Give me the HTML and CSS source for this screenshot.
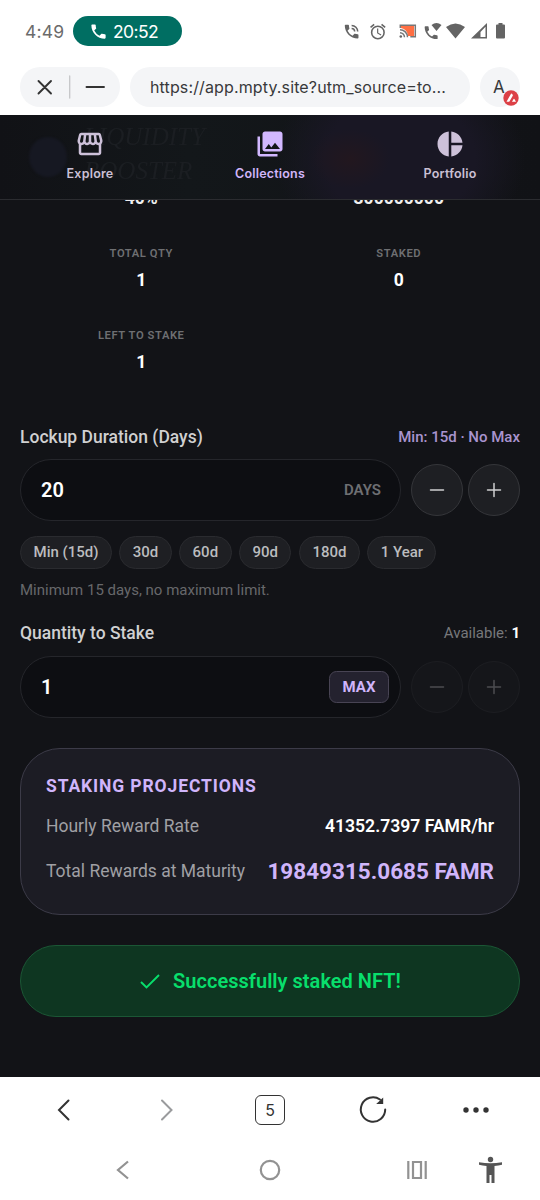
FILE: index.html
```html
<!DOCTYPE html>
<html lang="en">
<head>
<meta charset="utf-8">
<title>Staking</title>
<link rel="stylesheet" href="styles.css">
</head>
<body>
<div class="status">
  <span class="clock">4:49</span>
  <div class="call"><svg width="19" height="19" viewBox="0 0 24 24"><path d="M20 15.500c-1.200 0-2.500-.2-3.600-.6-.3-.1-.7 0-1 .2l-2.200 2.200a15 15 0 0 1-6.600-6.600l2.200-2.200c.3-.3.4-.7.2-1C8.700 6.400 8.500 5.200 8.500 4c0-.6-.4-1-1-1H4c-.6 0-1 .4-1 1 0 9.400 7.600 17 17 17 .6 0 1-.4 1-1v-3.500c0-.6-.4-1-1-1z"/></svg><span>20:52</span></div>
  <svg class="status-icons" width="165" height="20" viewBox="0 0 165 20">
    <g transform="translate(2.500 1.500) scale(.76)"><path d="M20 15.500c-1.250 0-2.450-.2-3.570-.57-.35-.11-.74-.03-1.020.24l-2.200 2.200a15 15 0 0 1-6.590-6.590l2.200-2.210c.28-.26.36-.65.250-1C8.700 6.450 8.500 5.250 8.500 4c0-.55-.45-1-1-1H4c-.55 0-1 .45-1 1 0 9.390 7.610 17 17 17 .55 0 1-.45 1-1v-3.500c0-.55-.45-1-1-1zM19 12h2a9 9 0 0 0-9-9v2a7 7 0 0 1 7 7zm-4 0h2a5 5 0 0 0-5-5v2a3 3 0 0 1 3 3z"/></g>
    <g transform="translate(28.500 1.300) scale(.78)"><path d="M22 5.720l-4.600-3.860-1.290 1.530 4.600 3.860zM7.880 3.390L6.600 1.860 2 5.710l1.290 1.530zM12.500 8H11v6l4.750 2.850.75-1.230-4-2.370zM12 4a9 9 0 1 0 0 18 9 9 0 0 0 0-18zm0 16a7 7 0 1 1 0-14 7 7 0 0 1 0 14z"/></g>
    <path class="cast-fill" d="M61 5h13v10h-6a9 9 0 0 0-7-8z"/>
    <path class="cast-line" d="M60.300 7V4.200h15v11.600h-5M60 8.700a7.500 7.500 0 0 1 7.500 7.500M60 11.700a4.500 4.500 0 0 1 4.500 4.500"/><circle cx="60.800" cy="15.500" r="1.300"/>
    <g transform="translate(82.500 3) scale(.72)"><path d="M20 15.500c-1.250 0-2.450-.2-3.570-.57-.35-.11-.74-.03-1.020.24l-2.200 2.200a15 15 0 0 1-6.590-6.590l2.200-2.210c.28-.26.36-.65.250-1C8.700 6.450 8.500 5.250 8.500 4c0-.55-.45-1-1-1H4c-.55 0-1 .45-1 1 0 9.390 7.610 17 17 17 .55 0 1-.45 1-1v-3.500c0-.55-.45-1-1-1z"/></g>
    <path d="M91.500 4Q96.500 0 101.500 4L96.500 10zM106 6Q115.500-1 125 6L115.500 17.500z"/>
    <path fill-rule="evenodd" d="M131 17.500L147 2v15.500zM140.500 11v5h5V5.800z"/>
    <path d="M157 3.500h1.500V2h4v1.500h1.500q1 0 1 1V16.500q0 1-1 1h-7q-1 0-1-1V4.500q0-1 1-1z"/>
  </svg>
</div>
<div class="urlbar">
  <div class="pill tools">
    <svg width="100" height="40" viewBox="0 0 100 40"><path class="ink" d="M18.500 14l12.500 12.500M31 14L18.500 26.500M66.500 20h17.500"/><path class="divider" d="M49.700 9v22"/></svg>
  </div>
  <div class="pill url">https://app.mpty.site?utm_source=to...</div>
  <div class="pill profile">A<svg class="badge" width="16" height="16" viewBox="0 0 16 16"><circle cx="8" cy="8" r="7.700"/><path d="M3.500 11.800L7.900 3.900q.8-1 1.500.3l.5 1.200L6.600 11.200q-.4.600-1 .6zM9 11.800l1.600-2.700q.4-.5.800 0l1.600 2.700z"/></svg></div>
</div>

<div class="app">
  <header class="nav">
    <div class="backdrop"><span class="orb"></span><span class="title">LIQUIDITY<br>BOOSTER</span></div>
    <a class="tab"><svg width="30" height="30" viewBox="0 0 24 24"><path d="M21.900 8.890l-1.050-4.370c-.22-.9-1-1.520-1.910-1.520H5.050c-.9 0-1.690.63-1.900 1.520L2.100 8.890c-.24 1.020-.02 2.060.62 2.880.08.11.19.19.28.29V19c0 1.100.9 2 2 2h14c1.100 0 2-.9 2-2v-6.940c.09-.09.2-.18.28-.28.64-.82.87-1.870.62-2.890zM18.910 4.990l1.050 4.370c.1.420.01.840-.25 1.170-.14.180-.44.470-.94.470-.61 0-1.140-.49-1.210-1.140L16.980 5zM13 5h1.960l.54 4.520c.05.390-.07.780-.33 1.070-.22.260-.54.410-.95.410-.67 0-1.220-.59-1.220-1.310zM8.490 9.520L9.040 5H11v4.690c0 .72-.55 1.310-1.290 1.310-.34 0-.65-.15-.89-.41-.25-.29-.37-.68-.33-1.070zm-4.450-.16L5.050 5h1.970l-.58 4.860c-.08.65-.6 1.140-1.210 1.140-.49 0-.8-.29-.93-.47-.27-.32-.36-.75-.26-1.170zM5 19v-6.030c.08.010.15.030.23.030.87 0 1.660-.36 2.240-.95.6.6 1.400.95 2.310.95.87 0 1.650-.36 2.230-.93.590.57 1.390.93 2.290.93.840 0 1.640-.35 2.240-.95.580.59 1.370.95 2.240.95.080 0 .15-.02.230-.03V19z"/></svg>Explore</a>
    <a class="tab active"><svg width="30" height="30" viewBox="0 0 24 24"><path d="M22 16V4c0-1.100-.9-2-2-2H8c-1.100 0-2 .9-2 2v12c0 1.100.9 2 2 2h12c1.100 0 2-.9 2-2zm-11-4l2.030 2.710L16 11l4 5H8zM2 6v14c0 1.100.9 2 2 2h14v-2H4V6z"/></svg>Collections</a>
    <a class="tab"><svg width="30" height="30" viewBox="0 0 24 24"><path d="M11 2v20c-5.070-.5-9-4.790-9-10s3.930-9.500 9-10zm2.030 0v8.990H22c-.47-4.740-4.240-8.520-8.970-8.990zm0 11.010V22c4.740-.47 8.500-4.250 8.970-8.990z"/></svg>Portfolio</a>
  </header>
  <main class="content">
    <div class="stats">
      <div class="stat"><b>40%</b></div>
      <div class="stat"><b>300000000</b></div>
      <div class="stat"><span>TOTAL QTY</span><b>1</b></div>
      <div class="stat"><span>STAKED</span><b>0</b></div>
      <div class="stat"><span>LEFT TO STAKE</span><b>1</b></div>
    </div>

    <div class="label-row"><span class="label">Lockup Duration (Days)</span><span class="limits">Min: 15d · No Max</span></div>
    <div class="input-row">
      <div class="field"><b>20</b><span class="unit">DAYS</span></div>
      <div class="round"><svg width="20" height="20" viewBox="0 0 20 20"><path d="M3.500 10h13"/></svg></div>
      <div class="round"><svg width="20" height="20" viewBox="0 0 20 20"><path d="M3.500 10h13M10 3.500v13"/></svg></div>
    </div>
    <div class="chips"><span class="w-min">Min (15d)</span><span>30d</span><span>60d</span><span>90d</span><span class="w-half">180d</span><span class="w-year">1 Year</span></div>
    <div class="hint">Minimum 15 days, no maximum limit.</div>

    <div class="label-row quantity"><span class="label">Quantity to Stake</span><span class="available">Available: <b>1</b></span></div>
    <div class="input-row">
      <div class="field"><b>1</b><span class="max">MAX</span></div>
      <div class="round off"><svg width="20" height="20" viewBox="0 0 20 20"><path d="M3.500 10h13"/></svg></div>
      <div class="round off"><svg width="20" height="20" viewBox="0 0 20 20"><path d="M3.500 10h13M10 3.500v13"/></svg></div>
    </div>

    <section class="card">
      <h2>STAKING PROJECTIONS</h2>
      <div class="line"><span class="key">Hourly Reward Rate</span><b class="rate">41352.7397 FAMR/hr</b></div>
      <div class="line total"><span class="key">Total Rewards at Maturity</span><b class="sum">19849315.0685 FAMR</b></div>
    </section>

    <div class="success"><svg width="22" height="22" viewBox="0 0 22 22"><path d="M2 12l5.500 5.500L20 5"/></svg><span>Successfully staked NFT!</span></div>
  </main>
</div>

<div class="toolbar">
  <svg width="30" height="34" viewBox="0 0 30 34"><path d="M19.500 7.500L10 17l9.500 9.500"/></svg>
  <svg class="dim" width="30" height="34" viewBox="0 0 30 34"><path d="M10 7.500l9.500 9.500-9.500 9.500"/></svg>
  <span class="tabs-count">5</span>
  <svg width="30" height="34" viewBox="0 0 30 34"><path d="M27.200 16.500A12.200 12.200 0 1 1 22 6.500"/><path class="solid" d="M25.200 4.500v6.500h-7z"/></svg>
  <svg width="30" height="34" viewBox="0 0 30 34"><g class="solid"><circle cx="5" cy="17" r="2.700"/><circle cx="15" cy="17" r="2.700"/><circle cx="25" cy="17" r="2.700"/></g></svg>
</div>
<div class="sysnav">
  <svg width="540" height="57" viewBox="0 0 540 57">
    <path d="M128 18.500L118 27l10 8.500"/><circle cx="270" cy="27" r="9.200"/>
    <path d="M408.300 18v18M425.700 18v18M413 19h8v16h-8z"/>
    <g class="person"><circle cx="490.500" cy="16.500" r="2.700"/><path d="M479 19.200q11.500 2.200 23 0v2.600q-3.500.8-7.500 1.100v17h-3V32h-2v7.900h-3v-17q-4-.3-7.500-1.100z"/></g>
  </svg>
</div>
</body>
</html>
```
FILE: styles.css
```css
* { box-sizing: border-box; }
body { margin: 0; width: 540px; height: 1200px; overflow: hidden; background: #fff; font-family: Roboto, sans-serif; }
svg { display: block; flex: none; }

.status { height: 62px; display: flex; align-items: center; padding: 0 31px 0 25px; color: #6b6b6b; font: 17.500px/30px Inter, sans-serif; }
.clock { width: 48px; letter-spacing: .2px; padding-top: 1px; }
.call { width: 109px; height: 30px; border-radius: 15px; background: #006e62; color: #fff; display: flex; align-items: center; gap: 5px; padding: 1px 0 0 16px; letter-spacing: -.6px; }
.call svg { fill: #fff; }
.status-icons { margin-left: auto; fill: #646464; overflow: visible; margin-right: 4px; }
.cast-fill { fill: #ff6f43; }
.cast-line { fill: none; stroke: #777; stroke-width: 1.500; }

.urlbar { height: 53px; padding: 5px 20px 8px; display: flex; gap: 10px; }
.pill { height: 40px; border-radius: 20px; background: #f4f5f7; color: #38393b; }
.tools { width: 100px; }
.tools path { fill: none; stroke-width: 1.900; stroke-linecap: round; }
.ink { stroke: #333; }
.tools .divider { stroke: #c5c6c8; stroke-width: 1.300; }
.url { width: 340px; padding-left: 20px; font: 16px/41px Inter, sans-serif; letter-spacing: .13px; white-space: nowrap; }
.profile { width: 40px; position: relative; font: 17px/40px Inter, sans-serif; padding-left: 13px; }
.badge { position: absolute; left: 23px; top: 23px; fill: #dc4046; }
.badge path { fill: #fff; }

.app { height: 962px; background: #121317; position: relative; overflow: hidden; }
.nav { position: absolute; z-index: 2; left: 0; top: 0; width: 540px; height: 85px; display: flex; border-bottom: 1px solid #2b2c30; background: radial-gradient(ellipse 40px 30px at 350px 44px, rgba(38, 23, 28, .7), rgba(38, 23, 28, 0)), radial-gradient(ellipse 125px 100px at 400px 44px, #191724 60%, rgba(25, 23, 36, 0)), linear-gradient(90deg, #111216, #13171a 35%, #111216); }
.backdrop { position: absolute; inset: 0; overflow: hidden; }
.orb { position: absolute; left: 29px; top: 22px; width: 38px; height: 40px; border-radius: 50%; background: #161822; filter: blur(1px); }
.title { position: absolute; left: 84px; top: 5px; font: italic 25px/34px "Liberation Serif", serif; color: #1b1e22; filter: blur(.6px); }
.tab { width: 180px; padding-top: 14px; display: flex; flex-direction: column; align-items: center; font: 600 12.500px/16px Inter, sans-serif; letter-spacing: .2px; color: #cac0d5; fill: #cdc1d9; gap: 7px; position: relative; }
.active { color: #d0b5f8; fill: #d2b8ff; }

.content { padding: 73px 20px 0; }
.stats { display: grid; grid-template-columns: 1fr 1fr; column-gap: 15px; grid-template-rows: 20px 82px 82px; height: 237.500px; }
.stat { display: flex; flex-direction: column; align-items: center; justify-content: flex-end; }
.stat span { font-size: 11.200px; line-height: 14px; font-weight: 600; letter-spacing: .58px; color: #6e6f72; margin-bottom: 9px; }
.stat b { font-size: 17.500px; line-height: 20px; color: #fff; }
.stat:nth-child(-n+2) b { color: #eee; }

.label-row { display: flex; justify-content: space-between; align-items: center; height: 22px; margin-bottom: 11px; }
.label { font-size: 17.500px; font-weight: 500; color: #d0d0d1; }
.limits { font-size: 15px; font-weight: 500; color: #a994cf; }
.available { font-size: 15px; color: #77787b; }
.available b { color: #fff; }
.input-row { display: flex; align-items: center; gap: 5px; height: 62px; }
.field { width: 381px; height: 62px; margin-right: 5px; border: 1px solid #25262b; border-radius: 31px; background: #0d0e12; display: flex; align-items: center; justify-content: space-between; padding: 0 11px 0 20px; }
.field b { font-size: 20px; font-weight: 600; color: #fff; }
.unit { font-size: 15px; font-weight: 600; color: #6e6f72; margin-right: 8px; }
.max { width: 60px; height: 32px; border: 1px solid #484454; border-radius: 7.500px; background: #24222f; color: #d0b5fb; font-size: 15px; line-height: 30px; font-weight: 700; text-align: center; }
.round { width: 52px; height: 52px; border-radius: 50%; border: 1px solid #35363a; background: #1e1f23; display: grid; place-items: center; }
.round path { stroke: #cfd0d1; stroke-width: 1.500; stroke-linecap: round; }
.off { opacity: .3; }
.chips { display: flex; gap: 7.300px; margin-top: 15px; }
.chips span { width: 52.500px; height: 33px; border: 1px solid #2a2b2f; border-radius: 17px; background: #1e1f23; color: #bbbcbe; font-size: 15px; line-height: 31px; font-weight: 500; text-align: center; }
.chips .w-min { width: 92px; }
.chips .w-half { width: 61.500px; }
.chips .w-year { width: 69px; }
.hint { font-size: 15px; line-height: 20px; color: #67686b; margin: 11.500px 0 22px; }
.quantity { margin-bottom: 12px; }

.card { height: 167px; margin-top: 30px; padding: 25px; border: 1px solid #3c3b48; border-radius: 40px; background: #1c1c24; }
.card h2 { margin: 0 0 16px; font-size: 17.500px; line-height: 25px; font-weight: 700; letter-spacing: .88px; color: #d0b5fb; }
.line { height: 21px; display: flex; align-items: center; justify-content: space-between; }
.total { margin-top: 24px; }
.key { font-size: 17.500px; color: #a0a0a4; }
.rate { font-size: 17.600px; font-weight: 600; color: #fff; }
.sum { font-size: 22.500px; font-weight: 700; color: #d0b5fb; }
.success { height: 72px; margin-top: 30px; border: 1px solid #1b5735; border-radius: 36px; background: #0e3621; display: flex; align-items: center; justify-content: center; gap: 12px; color: #08df6c; font-size: 20px; font-weight: 600; letter-spacing: .03px; }
.success path { fill: none; stroke: currentColor; stroke-width: 1.900; }

.toolbar { height: 66px; display: flex; align-items: center; justify-content: space-between; padding: 0 49px; }
.toolbar svg { fill: none; stroke: #333; stroke-width: 2; stroke-linecap: round; }
.toolbar .dim { stroke: #9a9b9d; }
.toolbar .solid { fill: #333; stroke: none; }
.tabs-count { width: 30px; height: 30px; border: 1.500px solid #333; border-radius: 6px; text-align: center; font: 16px/28px Inter, sans-serif; color: #333; }
.sysnav { height: 57px; }
.sysnav svg { fill: none; stroke: #929292; stroke-width: 2.200; }
.sysnav .person { fill: #555; stroke: none; }
```
